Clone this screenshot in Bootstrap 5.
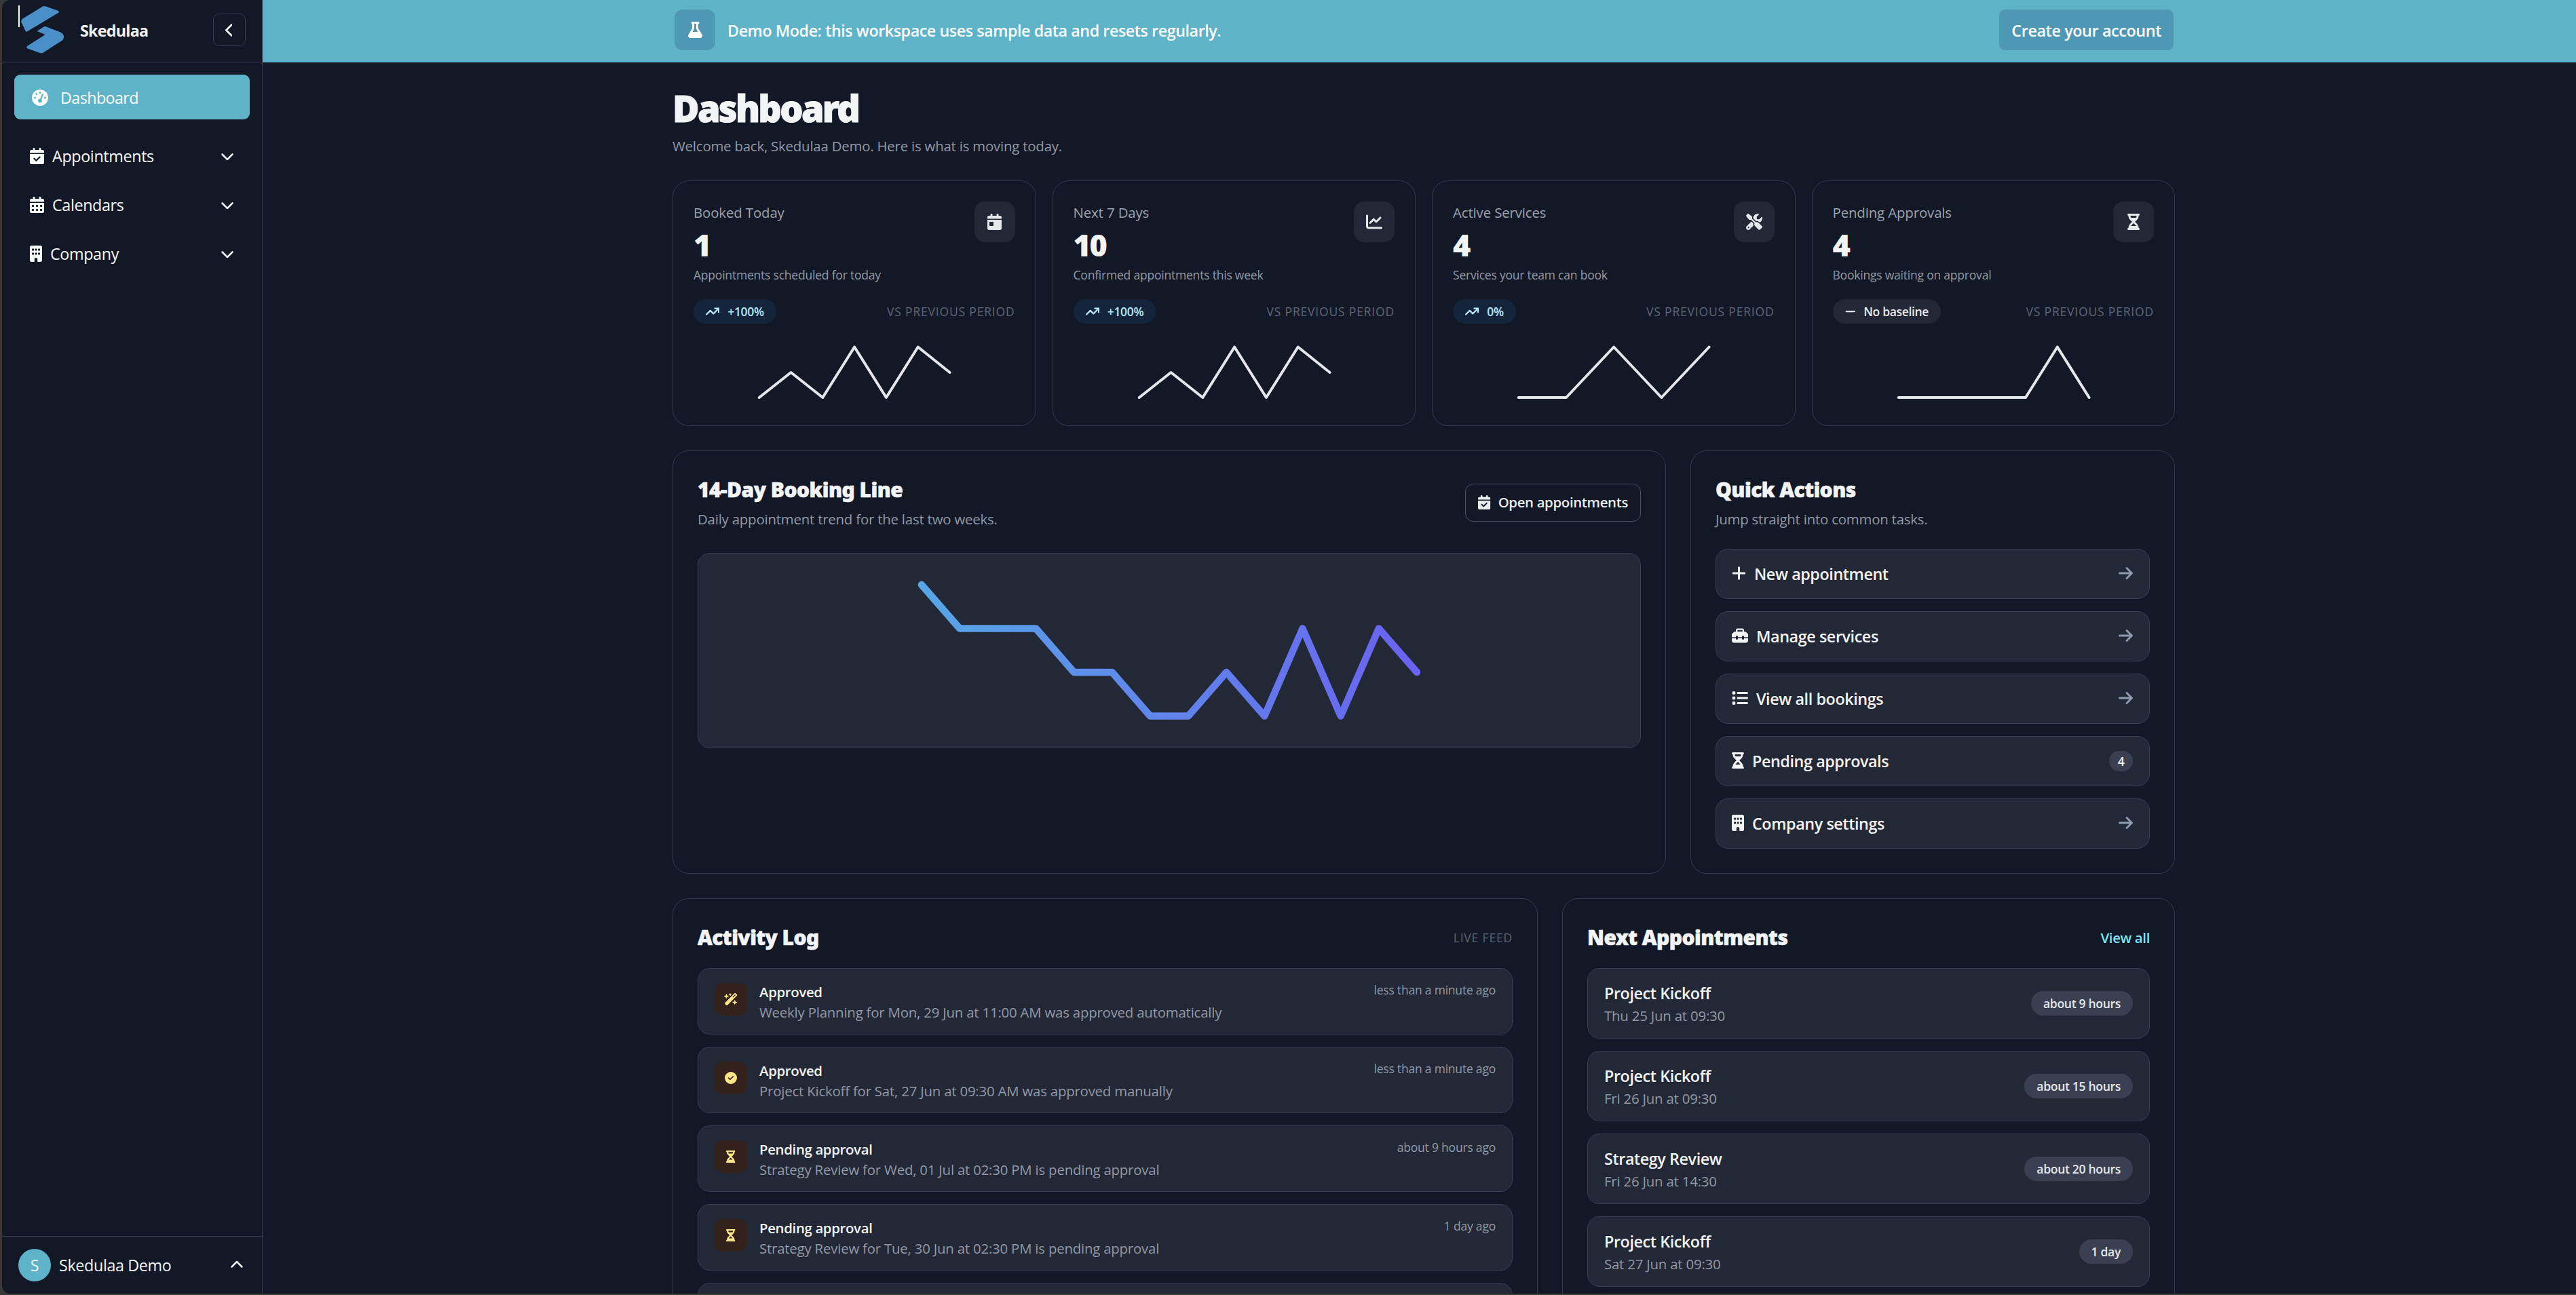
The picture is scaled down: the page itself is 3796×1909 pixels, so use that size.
<!DOCTYPE html>
<html lang="en">
<head>
  <meta charset="UTF-8" />
  <meta name="viewport" content="width=device-width, initial-scale=1" />
  <title>Skedulaa - Dashboard</title>
  <link href="https://cdn.jsdelivr.net/npm/bootstrap@5.3.3/dist/css/bootstrap.min.css" rel="stylesheet" />
  <style>
    html {
      font-size: 24px;
    }
    body {
      height: 100vh;
      overflow: hidden;
      background: #383838;
      color: #f3f4f6;
      font-family: "Open Sans", "Noto Sans", sans-serif;
      font-size: 23.3px;
      letter-spacing: -0.015em;
      padding: 0 0 2px 3px;
    }
    .shell {
      height: 100%;
      background: #121826;
      border-radius: 12px 0 0 12px;
      overflow: hidden;
    }
    .ico {
      height: 1em;
      width: auto;
      fill: currentColor;
      flex: none;
      display: block;
    }

    /* sidebar */
    .sidebar {
      width: 384px;
      flex: none;
      border-right: 1px solid #363c4e;
    }
    .sidebar-head {
      height: 92px;
      padding: 0 24px;
      border-bottom: 1px solid #363c4e;
    }
    .logo {
      width: 70px;
      height: 80px;
      margin-top: -3px;
    }
    .brand-name {
      margin-left: 21px;
      font-weight: 700;
      letter-spacing: -0.032em;
    }
    .collapse-btn {
      width: 48px;
      height: 48px;
      border: 1px solid #363c4e;
      border-radius: 9px;
      color: #fff;
      font-size: 21px;
      margin-top: -3px;
    }
    .collapse-btn .ico {
      margin-right: 2px;
    }
    .side-nav {
      padding: 18px 18px 0;
    }
    .side-link {
      height: 72px;
      padding: 0 23px;
      color: #f9fafb;
    }
    .side-link .ico {
      font-size: 24px;
    }
    .side-link .chev {
      font-size: 20px;
    }
    .side-link.on {
      height: 66px;
      margin-bottom: 18px;
      padding: 2px 26px 0;
      gap: 18px;
      border-radius: 9px;
      background: #5eb3c9;
      color: #fff;
      letter-spacing: -0.025em;
    }
    .side-foot {
      height: 85px;
      padding: 0 21px 0 24px;
      border-top: 1px solid #363c4e;
    }
    .avatar {
      width: 48px;
      height: 48px;
      background: #5eb3c9;
      margin-right: 12px;
    }
    .side-foot .chev {
      font-size: 20px;
    }

    /* demo banner */
    .demo-bar {
      height: 92px;
      flex: none;
      background: #5eb3c9;
      color: #fff;
      padding: 0 593px 4px 607px;
      font-weight: 600;
      letter-spacing: -0.019em;
    }
    .demo-icon, .demo-btn {
      height: 60px;
      background: #4f98b5;
      border-radius: 9px;
    }
    .demo-icon {
      width: 60px;
      font-size: 24px;
      border-radius: 12px;
    }
    .demo-text {
      margin-left: 18px;
      padding-top: 2px;
    }
    .demo-btn {
      padding: 3px 18px 0;
      line-height: 56px;
      letter-spacing: -0.016em;
    }

    /* page */
    .page {
      padding: 37px 591px 0 604px;
    }
    .page-title {
      font: 900 54px/60px "Noto Sans", sans-serif;
      letter-spacing: -0.051em;
      -webkit-text-stroke: 1px currentColor;
      margin: 0 0 11px;
    }
    .muted {
      color: #9299a6;
    }
    .txt-21 {
      font-size: 20.4px;
      line-height: 30px;
      letter-spacing: -0.01em;
    }
    .txt-18 {
      font-size: 17.5px;
      line-height: 24px;
      letter-spacing: -0.012em;
    }
    .semi {
      font-weight: 600;
      letter-spacing: -0.017em;
    }
    .overline {
      font-size: 17.5px;
      line-height: 24px;
      letter-spacing: 0.047em;
      color: #5f6676;
    }
    .panel {
      border: 1px solid #333a4b;
      border-radius: 24px;
    }
    .stat {
      flex: 1 1 0;
      padding: 30px;
    }
    .stat-label {
      font-size: 20.4px;
      line-height: 32px;
      color: #9ca3af;
      font-weight: 500;
      letter-spacing: -0.006em;
    }
    .stat-num {
      font: 900 45px/46px "Noto Sans", sans-serif;
      letter-spacing: -0.05em;
      margin: 9px 0;
    }
    .stat-icon {
      width: 60px;
      height: 60px;
      border-radius: 15px;
      background: #222836;
      color: #e5e7eb;
      font-size: 24px;
    }
    .trend {
      height: 36px;
      padding: 0 18px;
      gap: 12px;
      font-size: 17.5px;
      font-weight: 600;
      background: #14253b;
      color: #bae6fd;
    }
    .trend .ico {
      font-size: 18px;
    }
    .trend.flat {
      background: #222836;
      color: #e5e7eb;
    }
    .spark {
      width: 100%;
      height: 96px;
      margin-top: 24px;
      fill: none;
      stroke: #e5e7eb;
      stroke-width: 4;
      stroke-linecap: round;
      stroke-linejoin: round;
    }
    .panel-title {
      font: 900 30px/42px "Noto Sans", sans-serif;
      letter-spacing: -0.018em;
      -webkit-text-stroke: 0.6px currentColor;
      margin: 0;
    }
    .panel-sub {
      margin-top: 7px;
    }
    .booking {
      width: 1464px;
    }
    .quick, .row-box, .chart-box {
      border: 1px solid #393f51;
      border-radius: 18px;
      background: #222836;
    }
    .chart-box {
      height: 288px;
      margin-top: 35px;
    }
    .open-btn {
      height: 56px;
      padding: 0 18px;
      gap: 11px;
      border: 1px solid #4a5163;
      border-radius: 12px;
      font-size: 20.4px;
      color: #e9ebee;
    }
    .open-btn .ico {
      font-size: 21px;
    }
    .stack {
      gap: 18px;
    }
    .quick-list {
      margin-top: 29px;
    }
    .quick {
      height: 74px;
      padding: 0 24px 0 23px;
    }
    .quick .ico {
      font-size: 24px;
      margin-right: 12px;
      margin-top: -2px;
    }
    .quick .go {
      margin-right: 0;
      color: #8c9ab2;
    }
    .count {
      width: 35px;
      height: 30px;
      border-radius: 15px;
      background: #3a4051;
      font-size: 17.5px;
    }
    .activity {
      width: 1275px;
    }
    .log {
      height: 98px;
      padding: 18px 24px;
    }
    .log-icon {
      width: 48px;
      height: 48px;
      margin: 3px 18px 0 0;
      border-radius: 12px;
      background: #33211b;
      color: #fde68a;
      font-size: 18px;
    }
    .log-name {
      font-size: 20.4px;
      line-height: 33px;
    }
    .log-text {
      line-height: 27px;
    }
    .log-time {
      margin-top: 1px;
      color: #9299a6;
    }
    .appt {
      height: 104px;
      padding: 0 24px;
    }
    .appt-name {
      line-height: 36px;
    }
    .pill {
      height: 36px;
      padding: 0 18px;
      border-radius: 18px;
      background: #3a4051;
      color: #e5e7eb;
      font-size: 17.5px;
      line-height: 36px;
    }
    .view-all {
      color: #7ee8f5;
      font-size: 20.4px;
    }
  </style>
</head>
<body>
  <!-- icon sprite -->
  <svg class="d-none">
    <symbol id="i-check" viewBox="0 0 448 512"><path d="M128 0c17.7 0 32 14.3 32 32V64H288V32c0-17.7 14.3-32 32-32s32 14.3 32 32V64h48c26.5 0 48 21.5 48 48v48H0V112C0 85.5 21.5 64 48 64H96V32c0-17.7 14.3-32 32-32zM0 192H448V464c0 26.5-21.5 48-48 48H48c-26.5 0-48-21.5-48-48V192zM329 305c9.4-9.4 9.4-24.6 0-33.9s-24.6-9.4-33.9 0l-95 95-47-47c-9.4-9.4-24.6-9.4-33.9 0s-9.4 24.6 0 33.9l64 64c9.4 9.4 24.6 9.4 33.9 0L329 305z"/></symbol>
    <symbol id="i-days" viewBox="0 0 448 512"><path d="M128 0c17.7 0 32 14.3 32 32V64H288V32c0-17.7 14.3-32 32-32s32 14.3 32 32V64h48c26.5 0 48 21.5 48 48v48H0V112C0 85.5 21.5 64 48 64H96V32c0-17.7 14.3-32 32-32zM0 192H448V464c0 26.5-21.5 48-48 48H48c-26.5 0-48-21.5-48-48V192zm64 80v32c0 8.8 7.2 16 16 16h32c8.8 0 16-7.2 16-16V272c0-8.8-7.2-16-16-16H80c-8.8 0-16 7.2-16 16zm128 0v32c0 8.8 7.2 16 16 16h32c8.8 0 16-7.2 16-16V272c0-8.8-7.2-16-16-16H208c-8.8 0-16 7.2-16 16zm144-16c-8.8 0-16 7.2-16 16v32c0 8.8 7.2 16 16 16h32c8.8 0 16-7.2 16-16V272c0-8.8-7.2-16-16-16H336zM64 400v32c0 8.8 7.2 16 16 16h32c8.8 0 16-7.2 16-16V400c0-8.8-7.2-16-16-16H80c-8.8 0-16 7.2-16 16zm144-16c-8.8 0-16 7.2-16 16v32c0 8.8 7.2 16 16 16h32c8.8 0 16-7.2 16-16V400c0-8.8-7.2-16-16-16H208zm112 16v32c0 8.8 7.2 16 16 16h32c8.8 0 16-7.2 16-16V400c0-8.8-7.2-16-16-16H336c-8.8 0-16 7.2-16 16z"/></symbol>
    <symbol id="i-day" viewBox="0 0 448 512"><path d="M128 0c17.7 0 32 14.3 32 32V64H288V32c0-17.7 14.3-32 32-32s32 14.3 32 32V64h48c26.5 0 48 21.5 48 48v48H0V112C0 85.5 21.5 64 48 64H96V32c0-17.7 14.3-32 32-32zM0 192H448V464c0 26.5-21.5 48-48 48H48c-26.5 0-48-21.5-48-48V192zm80 64c-8.8 0-16 7.2-16 16v96c0 8.8 7.2 16 16 16h96c8.8 0 16-7.2 16-16V272c0-8.8-7.2-16-16-16H80z"/></symbol>
    <symbol id="i-building" viewBox="0 0 384 512"><path d="M48 0C21.5 0 0 21.5 0 48V464c0 26.5 21.5 48 48 48h96V432c0-26.5 21.5-48 48-48s48 21.5 48 48v80h96c26.5 0 48-21.5 48-48V48c0-26.5-21.5-48-48-48H48zM64 240c0-8.8 7.2-16 16-16h32c8.8 0 16 7.2 16 16v32c0 8.8-7.2 16-16 16H80c-8.8 0-16-7.2-16-16V240zm112-16h32c8.8 0 16 7.2 16 16v32c0 8.8-7.2 16-16 16H176c-8.8 0-16-7.2-16-16V240c0-8.8 7.2-16 16-16zm80 16c0-8.8 7.2-16 16-16h32c8.8 0 16 7.2 16 16v32c0 8.8-7.2 16-16 16H272c-8.8 0-16-7.2-16-16V240zM80 96h32c8.8 0 16 7.2 16 16v32c0 8.8-7.2 16-16 16H80c-8.8 0-16-7.2-16-16V112c0-8.8 7.2-16 16-16zm80 16c0-8.8 7.2-16 16-16h32c8.8 0 16 7.2 16 16v32c0 8.8-7.2 16-16 16H176c-8.8 0-16-7.2-16-16V112zM272 96h32c8.8 0 16 7.2 16 16v32c0 8.8-7.2 16-16 16H272c-8.8 0-16-7.2-16-16V112c0-8.8 7.2-16 16-16z"/></symbol>
    <symbol id="i-flask" viewBox="0 0 448 512"><path d="M288 0H160 128C110.3 0 96 14.3 96 32s14.3 32 32 32V196.8c0 11.8-3.3 23.5-9.5 33.5L10.3 406.2C3.6 417.2 0 429.7 0 442.6C0 480.9 31.1 512 69.4 512H378.6c38.3 0 69.4-31.1 69.4-69.4c0-12.8-3.6-25.4-10.3-36.4L329.5 230.4c-6.2-10.1-9.5-21.7-9.5-33.5V64c17.7 0 32-14.3 32-32s-14.3-32-32-32H288zM192 196.8V64h64V196.8c0 23.7 6.6 46.9 19 67.1L309.5 320h-171L173 263.9c12.4-20.2 19-43.4 19-67.1z"/></symbol>
    <symbol id="i-gauge" viewBox="0 0 512 512"><path d="M0 256a256 256 0 1 1 512 0A256 256 0 1 1 0 256zM288 96a32 32 0 1 0 -64 0 32 32 0 1 0 64 0zM256 416c35.3 0 64-28.7 64-64c0-17.4-6.9-33.1-18.1-44.6L366 161.7c5.3-12.1-.2-26.3-12.3-31.6s-26.3 .2-31.6 12.3L257.9 288c-.6 0-1.3 0-1.9 0c-35.3 0-64 28.7-64 64s28.7 64 64 64zM176 144a32 32 0 1 0 -64 0 32 32 0 1 0 64 0zM96 288a32 32 0 1 0 0-64 32 32 0 1 0 0 64zm352-32a32 32 0 1 0 -64 0 32 32 0 1 0 64 0z"/></symbol>
    <symbol id="i-chart" viewBox="0 0 512 512"><path d="M64 64c0-17.7-14.3-32-32-32S0 46.3 0 64V400c0 44.2 35.8 80 80 80H480c17.7 0 32-14.3 32-32s-14.3-32-32-32H80c-8.8 0-16-7.2-16-16V64zm406.6 86.6c12.5-12.5 12.5-32.8 0-45.3s-32.8-12.5-45.3 0L320 210.7l-57.4-57.4c-12.5-12.5-32.8-12.5-45.3 0l-112 112c-12.5 12.5-12.5 32.8 0 45.3s32.8 12.5 45.3 0L240 221.3l57.4 57.4c12.5 12.5 32.8 12.5 45.3 0l128-128z"/></symbol>
    <symbol id="i-tools" viewBox="0 0 512 512"><path d="M78.6 5C69.1-2.4 55.6-1.5 47 7L7 47c-8.5 8.5-9.4 22-2.1 31.6l80 104c4.5 5.9 11.6 9.4 19 9.4h54.1l109 109c-14.7 29-10 65.4 14.3 89.6l112 112c12.5 12.5 32.8 12.5 45.3 0l64-64c12.5-12.5 12.5-32.8 0-45.3l-112-112c-24.2-24.2-60.6-29-89.6-14.3l-109-109V104c0-7.5-3.5-14.5-9.4-19L78.6 5zM19.9 396.1C7.2 408.8 0 426.1 0 444.1C0 481.6 30.4 512 67.9 512c18 0 35.3-7.2 48-19.9L233.7 374.3c-7.8-20.9-9-43.6-3.6-65.1l-61.7-61.7L19.9 396.1zM512 144c0-10.5-1.1-20.7-3.2-30.5c-2.4-11.2-16.1-14.1-24.2-6l-63.9 63.9c-3 3-7.1 4.7-11.3 4.7H352c-8.8 0-16-7.2-16-16V102.6c0-4.2 1.7-8.3 4.7-11.3l63.9-63.9c8.1-8.1 5.2-21.8-6-24.2C388.7 1.1 378.5 0 368 0C288.5 0 224 64.5 224 144l0 .8 85.3 85.3c36-9.1 75.8 .5 104 28.7L429 274.5c49-23 83-72.8 83-130.5zM56 432a24 24 0 1 1 48 0 24 24 0 1 1 -48 0z"/></symbol>
    <symbol id="i-hourglass" viewBox="0 0 384 512"><path d="M32 0C14.3 0 0 14.3 0 32S14.3 64 32 64V75c0 42.4 16.9 83.1 46.9 113.1L146.7 256 78.9 323.9C48.9 353.9 32 394.6 32 437v11c-17.7 0-32 14.3-32 32s14.3 32 32 32H64 320h32c17.7 0 32-14.3 32-32s-14.3-32-32-32V437c0-42.4-16.9-83.1-46.9-113.1L237.3 256l67.9-67.9c30-30 46.9-70.7 46.9-113.1V64c17.7 0 32-14.3 32-32s-14.3-32-32-32H320 64 32zM96 75V64H288V75c0 19-5.6 37.4-16 53H112c-10.3-15.6-16-34-16-53zm16 309c3.5-5.3 7.6-10.3 12.1-14.9L192 301.3l67.9 67.9c4.6 4.6 8.6 9.6 12.1 14.9H112z"/></symbol>
    <symbol id="i-trend" viewBox="0 0 576 512"><path d="M384 160c-17.7 0-32-14.3-32-32s14.3-32 32-32H544c17.7 0 32 14.3 32 32V288c0 17.7-14.3 32-32 32s-32-14.3-32-32V205.3L342.6 374.6c-12.5 12.5-32.8 12.5-45.3 0L192 269.3 54.6 406.6c-12.5 12.5-32.8 12.5-45.3 0s-12.5-32.8 0-45.3l160-160c12.5-12.5 32.8-12.5 45.3 0L320 306.7 466.7 160H384z"/></symbol>
    <symbol id="i-minus" viewBox="0 0 448 512"><path d="M432 256c0 17.7-14.3 32-32 32H48c-17.7 0-32-14.3-32-32s14.3-32 32-32H400c17.7 0 32 14.3 32 32z"/></symbol>
    <symbol id="i-plus" viewBox="0 0 448 512"><path d="M256 80c0-17.7-14.3-32-32-32s-32 14.3-32 32V224H48c-17.7 0-32 14.3-32 32s14.3 32 32 32H192V432c0 17.7 14.3 32 32 32s32-14.3 32-32V288H400c17.7 0 32-14.3 32-32s-14.3-32-32-32H256V80z"/></symbol>
    <symbol id="i-arrow" viewBox="0 0 448 512"><path d="M438.6 278.6c12.5-12.5 12.5-32.8 0-45.3l-160-160c-12.5-12.5-32.8-12.5-45.3 0s-12.5 32.8 0 45.3L338.8 224 32 224c-17.7 0-32 14.3-32 32s14.3 32 32 32l306.7 0L233.4 393.4c-12.5 12.5-12.5 32.8 0 45.3s32.8 12.5 45.3 0l160-160z"/></symbol>
    <symbol id="i-toolbox" viewBox="0 0 512 512"><path d="M176 88v40H336V88c0-4.4-3.6-8-8-8H184c-4.4 0-8 3.6-8 8zm-48 40V88c0-30.9 25.1-56 56-56H328c30.9 0 56 25.1 56 56v40h28.1c12.7 0 24.9 5.1 33.9 14.1l51.9 51.9c9 9 14.1 21.2 14.1 33.9V304H384V288c0-17.7-14.3-32-32-32s-32 14.3-32 32v16H192V288c0-17.7-14.3-32-32-32s-32 14.3-32 32v16H0V227.9c0-12.7 5.1-24.9 14.1-33.9l51.9-51.9c9-9 21.2-14.1 33.9-14.1H128zM0 416V336H128v16c0 17.7 14.3 32 32 32s32-14.3 32-32V336H320v16c0 17.7 14.3 32 32 32s32-14.3 32-32V336H512v80c0 35.3-28.7 64-64 64H64c-35.3 0-64-28.7-64-64z"/></symbol>
    <symbol id="i-list" viewBox="0 0 512 512"><path d="M40 48C26.7 48 16 58.7 16 72v48c0 13.3 10.7 24 24 24H88c13.3 0 24-10.7 24-24V72c0-13.3-10.7-24-24-24H40zM192 64c-17.7 0-32 14.3-32 32s14.3 32 32 32H480c17.7 0 32-14.3 32-32s-14.3-32-32-32H192zm0 160c-17.7 0-32 14.3-32 32s14.3 32 32 32H480c17.7 0 32-14.3 32-32s-14.3-32-32-32H192zm0 160c-17.7 0-32 14.3-32 32s14.3 32 32 32H480c17.7 0 32-14.3 32-32s-14.3-32-32-32H192zM16 232v48c0 13.3 10.7 24 24 24H88c13.3 0 24-10.7 24-24V232c0-13.3-10.7-24-24-24H40c-13.3 0-24 10.7-24 24zM40 368c-13.3 0-24 10.7-24 24v48c0 13.3 10.7 24 24 24H88c13.3 0 24-10.7 24-24V392c0-13.3-10.7-24-24-24H40z"/></symbol>
    <symbol id="i-wand" viewBox="0 0 576 512"><path d="M234.7 42.7L197 56.8c-3 1.1-5 4-5 7.2s2 6.1 5 7.2l37.7 14.1L248.8 123c1.1 3 4 5 7.2 5s6.1-2 7.2-5l14.1-37.7L315 71.2c3-1.1 5-4 5-7.2s-2-6.1-5-7.2L277.3 42.7 263.2 5c-1.1-3-4-5-7.2-5s-6.1 2-7.2 5L234.7 42.7zM46.1 395.4c-18.7 18.7-18.7 49.1 0 67.9l34.6 34.6c18.7 18.7 49.1 18.7 67.9 0L529.9 116.5c18.7-18.7 18.7-49.1 0-67.9L495.3 14.1c-18.7-18.7-49.1-18.7-67.9 0L46.1 395.4zM484.6 82.6l-105 105-23.3-23.3 105-105 23.3 23.3zM7.5 117.2C3 118.9 0 123.2 0 128s3 9.1 7.5 10.8L64 160l21.2 56.5c1.7 4.5 6 7.5 10.8 7.5s9.1-3 10.8-7.5L128 160l56.5-21.2c4.5-1.7 7.5-6 7.5-10.8s-3-9.1-7.5-10.8L128 96 106.8 39.5C105.1 35 100.8 32 96 32s-9.1 3-10.8 7.5L64 96 7.5 117.2zm352 256c-4.5 1.7-7.5 6-7.5 10.8s3 9.1 7.5 10.8L416 416l21.2 56.5c1.7 4.5 6 7.5 10.8 7.5s9.1-3 10.8-7.5L480 416l56.5-21.2c4.5-1.7 7.5-6 7.5-10.8s-3-9.1-7.5-10.8L480 352l-21.2-56.5c-1.7-4.5-6-7.5-10.8-7.5s-9.1 3-10.8 7.5L416 352l-56.5 21.2z"/></symbol>
    <symbol id="i-done" viewBox="0 0 512 512"><path d="M256 512A256 256 0 1 0 256 0a256 256 0 1 0 0 512zM369 209L241 337c-9.4 9.4-24.6 9.4-33.9 0l-64-64c-9.4-9.4-9.4-24.6 0-33.9s24.6-9.4 33.9 0l47 47L335 175c9.4-9.4 24.6-9.4 33.9 0s9.4 24.6 0 33.9z"/></symbol>
    <symbol id="i-down" viewBox="0 0 512 512"><path d="M233.4 406.6c12.5 12.5 32.8 12.5 45.3 0l192-192c12.5-12.5 12.5-32.8 0-45.3s-32.8-12.5-45.3 0L256 338.7 86.6 169.4c-12.5-12.5-32.8-12.5-45.3 0s-12.5 32.8 0 45.3l192 192z"/></symbol>
    <symbol id="i-up" viewBox="0 0 512 512"><path d="M233.4 105.4c12.5-12.5 32.8-12.5 45.3 0l192 192c12.5 12.5 12.5 32.8 0 45.3s-32.8 12.5-45.3 0L256 173.3 86.6 342.6c-12.5 12.5-32.8 12.5-45.3 0s-12.5-32.8 0-45.3l192-192z"/></symbol>
    <symbol id="i-left" viewBox="0 0 256 512"><path d="M9.4 233.4c-12.5 12.5-12.5 32.8 0 45.3l192 192c12.5 12.5 32.8 12.5 45.3 0s12.5-32.8 0-45.3L77.3 256 246.6 86.6c12.5-12.5 12.5-32.8 0-45.3s-32.8-12.5-45.3 0l-192 192z"/></symbol>
  </svg>

  <div class="shell d-flex">
    <aside class="sidebar d-flex flex-column">
      <div class="sidebar-head d-flex align-items-center">
        <svg class="logo flex-shrink-0" viewBox="27 4 70 80">
          <rect x="27" y="8" width="2" height="32" fill="#fff"/>
          <path fill="#4a8fc7" d="M62.5 9.8Q65 8.5 67 9.3L86 16Q87.5 17 86.5 18.5L39.5 46.800Q38.2 47 37.5 45.5L31.5 33Q30.5 30 33.5 27.5Z"/>
          <path fill="#4a8fc7" d="M54.5 46L65 39.3Q66 38.7 67.5 39.2L88 47Q94 49.5 94 54Q94 58 91 60L63.5 77.7Q61 79 58 77.7L40.5 71.5Q38.5 70 40 68L66 51.5Q66.2 50.5 64.5 50Z"/>
        </svg>
        <span class="brand-name">Skedulaa</span>
        <span class="collapse-btn d-flex align-items-center justify-content-center ms-auto"><svg class="ico" viewBox="0 0 256 512"><use href="#i-left"/></svg></span>
      </div>

      <nav class="side-nav flex-grow-1">
        <div class="side-link on d-flex align-items-center"><svg class="ico" viewBox="0 0 512 512"><use href="#i-gauge"/></svg>Dashboard</div>
        <div class="side-link d-flex align-items-center"><svg class="ico me-2" viewBox="0 0 448 512"><use href="#i-check"/></svg>Appointments<svg class="ico chev ms-auto" viewBox="0 0 512 512"><use href="#i-down"/></svg></div>
        <div class="side-link d-flex align-items-center"><svg class="ico me-2" viewBox="0 0 448 512"><use href="#i-days"/></svg>Calendars<svg class="ico chev ms-auto" viewBox="0 0 512 512"><use href="#i-down"/></svg></div>
        <div class="side-link d-flex align-items-center"><svg class="ico me-2" viewBox="0 0 384 512"><use href="#i-building"/></svg>Company<svg class="ico chev ms-auto" viewBox="0 0 512 512"><use href="#i-down"/></svg></div>
      </nav>

      <div class="side-foot d-flex align-items-center">
        <span class="avatar rounded-circle d-flex align-items-center justify-content-center">S</span>
        Skedulaa Demo
        <svg class="ico chev ms-auto me-1" viewBox="0 0 512 512"><use href="#i-up"/></svg>
      </div>
    </aside>

    <div class="flex-grow-1 d-flex flex-column">
      <div class="demo-bar d-flex align-items-center">
        <span class="demo-icon d-flex align-items-center justify-content-center"><svg class="ico" viewBox="0 0 448 512"><use href="#i-flask"/></svg></span>
        <span class="demo-text flex-grow-1">Demo Mode: this workspace uses sample data and resets regularly.</span>
        <span class="demo-btn">Create your account</span>
      </div>

      <main class="page">
        <h1 class="page-title">Dashboard</h1>
        <div class="muted txt-21 mb-4">Welcome back, Skedulaa Demo. Here is what is moving today.</div>

        <!-- stats -->
        <div class="d-flex gap-3">
          <div class="panel stat">
            <div class="d-flex justify-content-between">
              <div>
                <div class="stat-label">Booked Today</div>
                <div class="stat-num">1</div>
                <div class="muted txt-18">Appointments scheduled for today</div>
              </div>
              <span class="stat-icon d-flex align-items-center justify-content-center"><svg class="ico" viewBox="0 0 448 512"><use href="#i-day"/></svg></span>
            </div>
            <div class="d-flex justify-content-between align-items-center mt-3">
              <span class="trend rounded-pill d-flex align-items-center"><svg class="ico" viewBox="0 0 576 512"><use href="#i-trend"/></svg>+100%</span>
              <span class="overline">VS PREVIOUS PERIOD</span>
            </div>
            <svg class="spark d-block" viewBox="0 0 473 96"><polyline points="96.5,85 143.3,48 190.1,85 236.9,10.5 283.7,85 330.5,10.5 377.3,48"/></svg>
          </div>
          <div class="panel stat">
            <div class="d-flex justify-content-between">
              <div>
                <div class="stat-label">Next 7 Days</div>
                <div class="stat-num">10</div>
                <div class="muted txt-18">Confirmed appointments this week</div>
              </div>
              <span class="stat-icon d-flex align-items-center justify-content-center"><svg class="ico" viewBox="0 0 512 512"><use href="#i-chart"/></svg></span>
            </div>
            <div class="d-flex justify-content-between align-items-center mt-3">
              <span class="trend rounded-pill d-flex align-items-center"><svg class="ico" viewBox="0 0 576 512"><use href="#i-trend"/></svg>+100%</span>
              <span class="overline">VS PREVIOUS PERIOD</span>
            </div>
            <svg class="spark d-block" viewBox="0 0 473 96"><polyline points="96.5,85 143.3,48 190.1,85 236.9,10.5 283.7,85 330.5,10.5 377.3,48"/></svg>
          </div>
          <div class="panel stat">
            <div class="d-flex justify-content-between">
              <div>
                <div class="stat-label">Active Services</div>
                <div class="stat-num">4</div>
                <div class="muted txt-18">Services your team can book</div>
              </div>
              <span class="stat-icon d-flex align-items-center justify-content-center"><svg class="ico" viewBox="0 0 512 512"><use href="#i-tools"/></svg></span>
            </div>
            <div class="d-flex justify-content-between align-items-center mt-3">
              <span class="trend rounded-pill d-flex align-items-center"><svg class="ico" viewBox="0 0 576 512"><use href="#i-trend"/></svg>0%</span>
              <span class="overline">VS PREVIOUS PERIOD</span>
            </div>
            <svg class="spark d-block" viewBox="0 0 473 96"><polyline points="96.5,85 166.7,85 236.9,10.5 307.1,85 377.3,10.5"/></svg>
          </div>
          <div class="panel stat">
            <div class="d-flex justify-content-between">
              <div>
                <div class="stat-label">Pending Approvals</div>
                <div class="stat-num">4</div>
                <div class="muted txt-18">Bookings waiting on approval</div>
              </div>
              <span class="stat-icon d-flex align-items-center justify-content-center"><svg class="ico" viewBox="0 0 384 512"><use href="#i-hourglass"/></svg></span>
            </div>
            <div class="d-flex justify-content-between align-items-center mt-3">
              <span class="trend flat rounded-pill d-flex align-items-center"><svg class="ico" viewBox="0 0 448 512"><use href="#i-minus"/></svg>No baseline</span>
              <span class="overline">VS PREVIOUS PERIOD</span>
            </div>
            <svg class="spark d-block" viewBox="0 0 473 96"><polyline points="96.5,85 283.7,85 330.5,10.5 377.3,85"/></svg>
          </div>
        </div>

        <!-- trend + quick actions -->
        <div class="d-flex gap-4 mt-4">
          <section class="panel booking p-4 flex-shrink-0">
            <div class="d-flex justify-content-between align-items-center">
              <div>
                <h2 class="panel-title">14-Day Booking Line</h2>
                <div class="panel-sub muted txt-21">Daily appointment trend for the last two weeks.</div>
              </div>
              <span class="open-btn semi d-flex align-items-center"><svg class="ico" viewBox="0 0 448 512"><use href="#i-check"/></svg>Open appointments</span>
            </div>
            <div class="chart-box">
              <svg class="d-block w-100 h-100" viewBox="0 0 1388 286" fill="none">
                <defs>
                  <linearGradient id="lineFill" x1="0" y1="0" x2="1" y2="0">
                    <stop offset="0" stop-color="#57a6e6"/>
                    <stop offset="1" stop-color="#6a62f0"/>
                  </linearGradient>
                </defs>
                <polyline stroke="url(#lineFill)" stroke-width="10.5" stroke-linecap="round" stroke-linejoin="round"
                  points="329,46 385.2,110.5 441.3,110.5 497.5,110.5 553.6,175 609.8,175 665.9,239.5 722.1,239.5 778.2,175 834.4,239.5 890.5,110.5 946.7,239.5 1002.8,110.5 1059,175"/>
              </svg>
            </div>
          </section>

          <section class="panel p-4 flex-grow-1">
            <h2 class="panel-title">Quick Actions</h2>
            <div class="panel-sub muted txt-21">Jump straight into common tasks.</div>
            <div class="quick-list stack d-flex flex-column">
              <div class="quick semi d-flex align-items-center"><svg class="ico" viewBox="0 0 448 512"><use href="#i-plus"/></svg>New appointment<svg class="ico go ms-auto" viewBox="0 0 448 512"><use href="#i-arrow"/></svg></div>
              <div class="quick semi d-flex align-items-center"><svg class="ico" viewBox="0 0 512 512"><use href="#i-toolbox"/></svg>Manage services<svg class="ico go ms-auto" viewBox="0 0 448 512"><use href="#i-arrow"/></svg></div>
              <div class="quick semi d-flex align-items-center"><svg class="ico" viewBox="0 0 512 512"><use href="#i-list"/></svg>View all bookings<svg class="ico go ms-auto" viewBox="0 0 448 512"><use href="#i-arrow"/></svg></div>
              <div class="quick semi d-flex align-items-center"><svg class="ico" viewBox="0 0 384 512"><use href="#i-hourglass"/></svg>Pending approvals<span class="count ms-auto d-flex align-items-center justify-content-center">4</span></div>
              <div class="quick semi d-flex align-items-center"><svg class="ico" viewBox="0 0 384 512"><use href="#i-building"/></svg>Company settings<svg class="ico go ms-auto" viewBox="0 0 448 512"><use href="#i-arrow"/></svg></div>
            </div>
          </section>
        </div>

        <!-- activity + upcoming -->
        <div class="d-flex gap-4 mt-4">
          <section class="panel activity p-4 flex-shrink-0">
            <div class="d-flex justify-content-between align-items-center mb-3">
              <h2 class="panel-title">Activity Log</h2>
              <span class="overline">LIVE FEED</span>
            </div>
            <div class="stack d-flex flex-column">
              <div class="row-box log d-flex">
                <span class="log-icon d-flex align-items-center justify-content-center"><svg class="ico" viewBox="0 0 576 512"><use href="#i-wand"/></svg></span>
                <div class="flex-grow-1">
                  <div class="log-name semi">Approved</div>
                  <div class="log-text txt-21 muted">Weekly Planning for Mon, 29 Jun at 11:00 AM was approved automatically</div>
                </div>
                <span class="log-time txt-18">less than a minute ago</span>
              </div>
              <div class="row-box log d-flex">
                <span class="log-icon d-flex align-items-center justify-content-center"><svg class="ico" viewBox="0 0 512 512"><use href="#i-done"/></svg></span>
                <div class="flex-grow-1">
                  <div class="log-name semi">Approved</div>
                  <div class="log-text txt-21 muted">Project Kickoff for Sat, 27 Jun at 09:30 AM was approved manually</div>
                </div>
                <span class="log-time txt-18">less than a minute ago</span>
              </div>
              <div class="row-box log d-flex">
                <span class="log-icon d-flex align-items-center justify-content-center"><svg class="ico" viewBox="0 0 384 512"><use href="#i-hourglass"/></svg></span>
                <div class="flex-grow-1">
                  <div class="log-name semi">Pending approval</div>
                  <div class="log-text txt-21 muted">Strategy Review for Wed, 01 Jul at 02:30 PM is pending approval</div>
                </div>
                <span class="log-time txt-18">about 9 hours ago</span>
              </div>
              <div class="row-box log d-flex">
                <span class="log-icon d-flex align-items-center justify-content-center"><svg class="ico" viewBox="0 0 384 512"><use href="#i-hourglass"/></svg></span>
                <div class="flex-grow-1">
                  <div class="log-name semi">Pending approval</div>
                  <div class="log-text txt-21 muted">Strategy Review for Tue, 30 Jun at 02:30 PM is pending approval</div>
                </div>
                <span class="log-time txt-18">1 day ago</span>
              </div>
              <div class="row-box log"></div>
            </div>
          </section>

          <section class="panel p-4 flex-grow-1">
            <div class="d-flex justify-content-between align-items-center mb-3">
              <h2 class="panel-title">Next Appointments</h2>
              <span class="view-all semi">View all</span>
            </div>
            <div class="stack d-flex flex-column">
              <div class="row-box appt d-flex align-items-center justify-content-between">
                <div>
                  <div class="appt-name semi">Project Kickoff</div>
                  <div class="txt-21 muted">Thu 25 Jun at 09:30</div>
                </div>
                <span class="pill semi">about 9 hours</span>
              </div>
              <div class="row-box appt d-flex align-items-center justify-content-between">
                <div>
                  <div class="appt-name semi">Project Kickoff</div>
                  <div class="txt-21 muted">Fri 26 Jun at 09:30</div>
                </div>
                <span class="pill semi">about 15 hours</span>
              </div>
              <div class="row-box appt d-flex align-items-center justify-content-between">
                <div>
                  <div class="appt-name semi">Strategy Review</div>
                  <div class="txt-21 muted">Fri 26 Jun at 14:30</div>
                </div>
                <span class="pill semi">about 20 hours</span>
              </div>
              <div class="row-box appt d-flex align-items-center justify-content-between">
                <div>
                  <div class="appt-name semi">Project Kickoff</div>
                  <div class="txt-21 muted">Sat 27 Jun at 09:30</div>
                </div>
                <span class="pill semi">1 day</span>
              </div>
            </div>
          </section>
        </div>
      </main>
    </div>
  </div>

  <script src="https://cdn.jsdelivr.net/npm/bootstrap@5.3.3/dist/js/bootstrap.bundle.min.js"></script>
</body>
</html>
